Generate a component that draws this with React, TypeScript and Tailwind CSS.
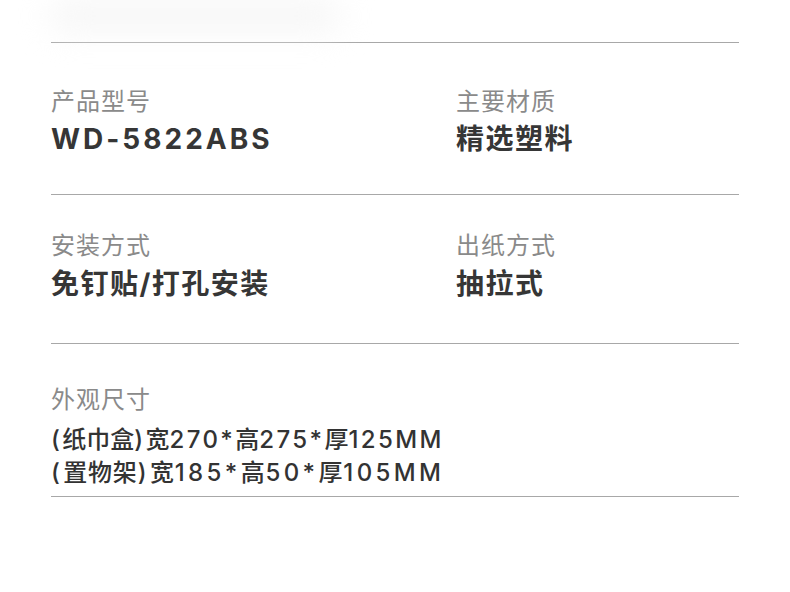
const font = {
  fontFamily: '"Inter", "Noto Sans CJK SC", sans-serif',
};

const Label = ({ children }: { children: string }) => (
  <div className="text-[24px] leading-[24px] text-[#8a8a8a] tracking-[1px]">
    {children}
  </div>
);

const Value = ({ children, wide }: { children: string; wide?: boolean }) => (
  <div
    className={`text-[28px] leading-[28px] font-bold text-[#363636] ${
      wide ? "tracking-[3px]" : "tracking-[1.5px]"
    }`}
  >
    {children}
  </div>
);

// latin runs are spaced wider than the chinese ones; the second line is
// stretched so both lines end at the same edge
const Dim = ({ parts, loose }: { parts: string[]; loose?: boolean }) => (
  <div>
    {parts.map((p, i) =>
      /[\u4e00-\u9fff]/.test(p) ? (
        <span key={i} className={loose ? "tracking-[0.8px]" : ""}>
          {p}
        </span>
      ) : (
        <span key={i} className={loose ? "tracking-[3.4px]" : "tracking-[2.4px]"}>
          {p}
        </span>
      )
    )}
  </div>
);

export default function App() {
  return (
    <div className="w-[790px] h-[592px] bg-white overflow-hidden" style={font}>
      {/* faded remnant of the picture above */}
      <div className="h-[42px] pt-[2px]">
        <div className="ml-[50px] w-[290px] h-[28px] rounded-full bg-[#f5f5f5] blur-lg" />
      </div>

      <div className="ml-[51px] w-[688px]">
        <div className="border-t border-[#a8a8a8] grid grid-cols-[405px_1fr] pt-[47px] pb-[41px]">
          <div className="flex flex-col gap-[11px]">
            <Label>产品型号</Label>
            <Value wide>WD-5822ABS</Value>
          </div>
          <div className="flex flex-col gap-[11px]">
            <Label>主要材质</Label>
            <Value>精选塑料</Value>
          </div>
        </div>

        <div className="border-t border-[#a8a8a8] grid grid-cols-[405px_1fr] pt-[39px] pb-[45px]">
          <div className="flex flex-col gap-[12px]">
            <Label>安装方式</Label>
            <Value>免钉贴/打孔安装</Value>
          </div>
          <div className="flex flex-col gap-[12px]">
            <Label>出纸方式</Label>
            <Value>抽拉式</Value>
          </div>
        </div>

        <div className="border-t border-[#a8a8a8] pt-[44px] pb-[7px] border-b">
          <Label>外观尺寸</Label>
          <div className="mt-[11px] text-[24px] leading-[33px] font-medium text-[#333]">
            <Dim parts={["(", "纸巾盒", ")", "宽", "270*", "高", "275*", "厚", "125MM"]} />
            <Dim loose parts={["(", "置物架", ")", "宽", "185*", "高", "50*", "厚", "105MM"]} />
          </div>
        </div>
      </div>
    </div>
  );
}
